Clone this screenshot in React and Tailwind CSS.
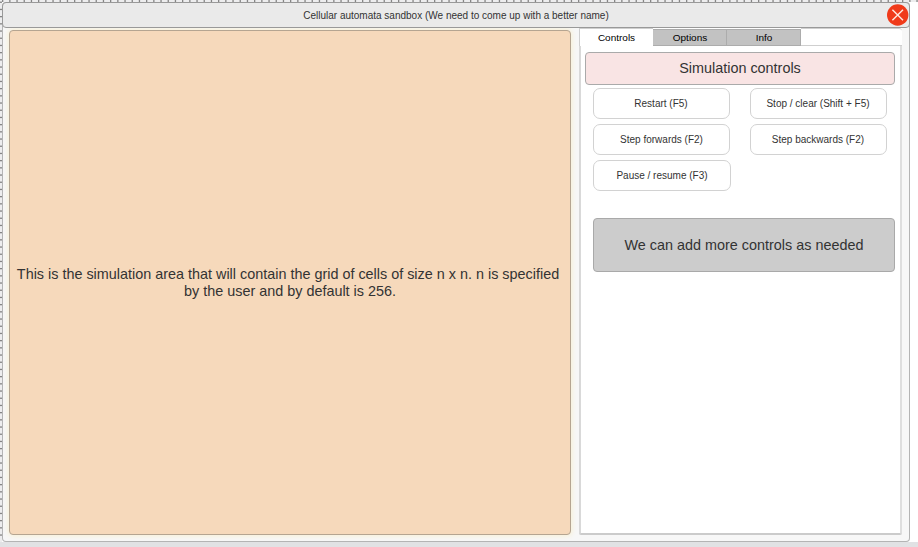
import React from "react";

const FONT = "font-['Liberation_Sans',Arial,sans-serif]";

function ControlButton({ children, className = "w-[137px]" }) {
  return (
    <button
      className={`h-[31px] rounded-[7px] border border-[#d2d2d2] bg-white text-[10px] leading-[12px] text-[#333] ${className}`}
    >
      {children}
    </button>
  );
}

function Tab({ label, active, className }) {
  return (
    <div
      className={`flex items-center justify-center text-[10px] leading-[12px] text-black ${
        active
          ? "h-[18px] border-l border-t border-[#cfcfcf] bg-white"
          : "h-[17px] border-r border-y border-[#acacac] bg-[#c2c2c2] pl-px"
      } ${className}`}
    >
      <span className="scale-y-[0.87]">{label}</span>
    </div>
  );
}

function TitleBar() {
  return (
    <header className="relative flex h-[26px] shrink-0 items-center justify-center rounded-[4px] border border-[#999] bg-[#eaeaea] text-[10px] text-[#333]">
      <span className="pt-px">Cellular automata sandbox (We need to come up with a better name)</span>
      <svg className="absolute right-0 top-[1px]" width="22" height="22" viewBox="0 0 22 22">
        <circle cx="10.7" cy="11" r="10.7" fill="#f03a1a" />
        <path d="M5.4 5.7L16 16.3M16 5.7L5.4 16.3" stroke="#ffe9e0" strokeWidth="1.4" fill="none" />
      </svg>
    </header>
  );
}

/* Ruler ticks visible behind the window's top and left edges. */
function Ruler() {
  return (
    <svg className="absolute left-0 top-0" width="918" height="547">
      <rect width="918" height="2" fill="#ededee" />
      <rect width="2" height="542" fill="#ededee" />
      {Array.from({ length: 128 }, (_, i) => (
        <rect key={`h${i}`} x={2 + i * 7.2} y="0" width="1.3" height="2" fill="#858585" />
      ))}
      {Array.from({ length: 75 }, (_, i) => (
        <rect key={`v${i}`} x="0" y={1.6 + i * 7.2} width="2" height="1.3" fill="#858585" />
      ))}
    </svg>
  );
}

export default function App() {
  return (
    <div className={`relative h-[547px] w-[918px] overflow-hidden bg-white pl-[2px] pt-[2px] ${FONT}`}>
      <Ruler />
      <div className="relative flex h-[540px] w-[908px] flex-col rounded-[4px] bg-[#f7f7f7] shadow-[inset_0_0_0_1px_#b4b4b4]">
        <TitleBar />
        <main className="flex pl-[7px]">
          <section className="mt-[2px] flex h-[505px] w-[562px] items-center justify-center rounded-[4px] border border-[#b5a591] bg-[#f6d9bb] text-center text-[14.4px] leading-[17px] text-[#333] shadow-[0_0_5px_1px_#f8f0d4]">
            <p className="whitespace-nowrap pt-px">
              This is the simulation area that will contain the grid of cells of size n x n. n is specified&nbsp;
              <br />
              by the user and by default is 256.
            </p>
          </section>
          <aside className="ml-[8px] flex w-[323px] flex-col">
            <nav className="flex h-[18px] bg-white">
              <Tab label="Controls" active className="w-[74px]" />
              <Tab label="Options" className="mt-px w-[74px]" />
              <Tab label="Info" className="mt-px w-[74px]" />
              <div className="flex-1 rounded-tr-[3px] border-b border-t border-[#cfcfcf]" />
            </nav>
            <div className="h-[489px] rounded-b-[2px] border-b-2 border-l-2 border-r-2 border-b-[#cbcbcb] border-l-[#d9d9d9] border-r-[#dedede] bg-white pl-[4px] pt-[6px]">
              <h1 className="flex h-[33px] w-[310px] items-center justify-center rounded-[4px] border border-[#aaa] bg-[#f9e4e4] pb-px text-[14.4px] leading-[20px] text-[#333]">
                Simulation controls
              </h1>
              <div className="ml-[8px] mt-[3px] grid w-[294px] grid-cols-[157px_137px] gap-y-[5px]">
                <ControlButton className="w-[137px] pr-px">Restart (F5)</ControlButton>
                <ControlButton className="w-[137px] pr-px">Stop / clear (Shift + F5)</ControlButton>
                <ControlButton className="w-[137px]">Step forwards (F2)</ControlButton>
                <ControlButton className="w-[137px] pr-px">Step backwards (F2)</ControlButton>
                <ControlButton className="w-[138px]">Pause / resume (F3)</ControlButton>
              </div>
              <div className="ml-[8px] mt-[27px] flex h-[54px] w-[302px] items-center justify-center rounded-[4px] border border-[#a9a9a9] bg-[#ccc] text-[14.4px] leading-[20px] text-[#333]">
                We can add more controls as needed
              </div>
            </div>
          </aside>
        </main>
      </div>
      <footer className="relative -ml-[2px] h-[5px] bg-[#e1e2e4]" />
    </div>
  );
}
